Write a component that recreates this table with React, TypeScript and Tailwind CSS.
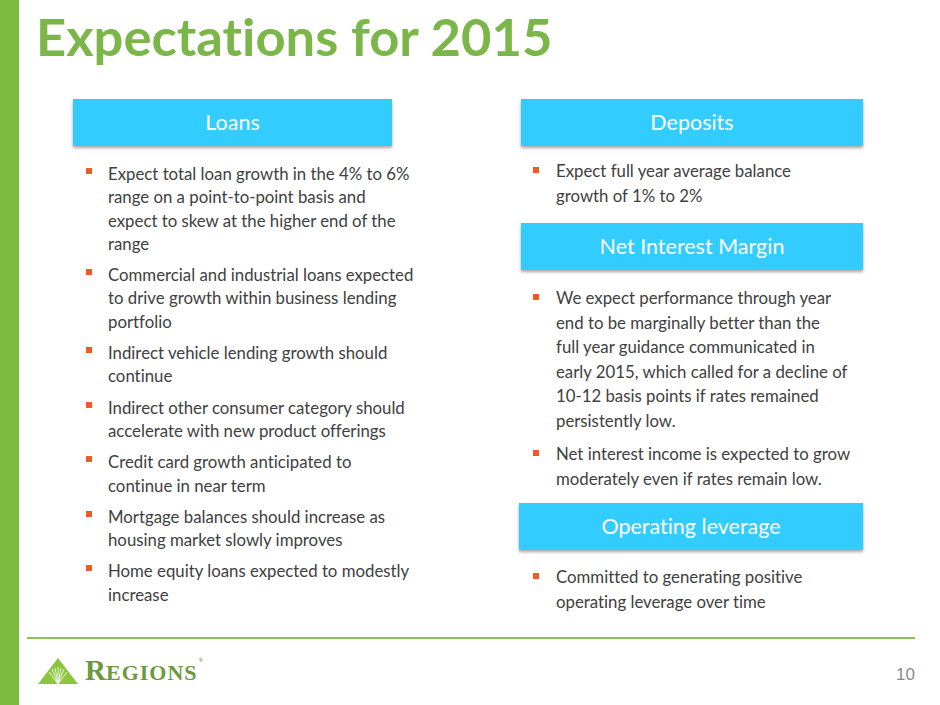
import React from "react";

const Bullet = ({ lines, pad, lh }: { lines: string[]; pad: string; lh: string }) => (
  <li className="flex">
    <span className={`w-[35px] shrink-0 flex ${pad}`}>
      <span className="block w-[6px] h-[6px] bg-[#f15a24]" />
    </span>
    <span className={`text-[16.8px] text-[#404040] ${lh}`}>
      {lines.map((l, i) => (
        <span key={i} className="block whitespace-nowrap">
          {l}
        </span>
      ))}
    </span>
  </li>
);

const Header = ({ title, extra = "" }: { title: string; extra?: string }) => (
  <div
    className={`h-[47px] bg-[#33ccff] flex items-center justify-center text-white text-[21.5px] shadow-[0_2px_3px_rgba(0,0,0,0.35)] ${extra}`}
  >
    {title}
  </div>
);

const leftItems = [
  [
    "Expect total loan growth in the 4% to 6%",
    "range on a point-to-point basis and",
    "expect to skew at the higher end of the",
    "range",
  ],
  [
    "Commercial and industrial loans expected",
    "to drive growth within business lending",
    "portfolio",
  ],
  ["Indirect vehicle lending growth should", "continue"],
  ["Indirect other consumer category should", "accelerate with new product offerings"],
  ["Credit card growth anticipated to", "continue in near term"],
  ["Mortgage balances should increase as", "housing market slowly improves"],
  ["Home equity loans expected to modestly", "increase"],
];

function Logo() {
  return (
    <div className="flex items-center">
      <svg width="40" height="26" viewBox="0 0 40 26" className="block">
        <polygon points="0,26 20,0 40,26" fill="#8cc63f" />
        <g stroke="#ffffff" strokeWidth="0.9" fill="none" opacity="0.9">
          <path d="M20 26 L11 14" />
          <path d="M20 26 L14 11" />
          <path d="M20 26 L17 10" />
          <path d="M20 26 L20 9" />
          <path d="M20 26 L23 10" />
          <path d="M20 26 L26 11" />
          <path d="M20 26 L29 14" />
        </g>
      </svg>
      <span className="ml-[7px] font-[family-name:'Liberation_Serif',serif] font-bold text-[#6b9a3b] leading-none flex items-baseline">
        <span className="text-[29px]">R</span>
        <span className="text-[22px] tracking-[1px]">EGIONS</span>
        <span className="text-[6px] self-start mt-[1px] ml-[1px]">®</span>
      </span>
    </div>
  );
}

export default function App() {
  return (
    <div className="w-[940px] h-[705px] bg-white flex overflow-hidden font-[family-name:'Lato',sans-serif] [font-variant-ligatures:none]">
      <div className="w-[19px] shrink-0 bg-[#7dbb42]" />
      <div className="flex-1 flex flex-col">
        <div className="h-[99px] pl-[17px] pt-[9px]">
          <h1 className="text-[52.5px] leading-[54px] font-bold text-[#7ab648] whitespace-nowrap">
            Expectations for 2015
          </h1>
        </div>
        <div className="h-[538px] flex">
          <div className="ml-[54px] w-[319px]">
            <Header title="Loans" />
            <ul className="mt-[16px] flex flex-col gap-[8px]">
              {leftItems.map((l, i) => (
                <Bullet key={i} lines={l} pad="pl-[13px] pt-[6px]" lh="leading-[23.3px]" />
              ))}
            </ul>
          </div>
          <div className="ml-[129px] w-[342px]">
            <Header title="Deposits" />
            <ul className="mt-[13px]">
              <Bullet
                lines={["Expect full year average balance", "growth of 1% to 2%"]}
                pad="pl-[12px] pt-[8px]"
                lh="leading-[24.5px]"
              />
            </ul>
            <Header title="Net Interest Margin" extra="mt-[15px]" />
            <ul className="mt-[16px] flex flex-col gap-[9px]">
              <Bullet
                lines={[
                  "We expect performance through year",
                  "end to be marginally better than the",
                  "full year guidance communicated in",
                  "early 2015, which called for a decline of",
                  "10-12 basis points if rates remained",
                  "persistently low.",
                ]}
                pad="pl-[12px] pt-[8px]"
                lh="leading-[24.5px]"
              />
              <Bullet
                lines={[
                  "Net interest income is expected to grow",
                  "moderately even if rates remain low.",
                ]}
                pad="pl-[12px] pt-[8px]"
                lh="leading-[24.5px]"
              />
            </ul>
            <Header title="Operating leverage" extra="mt-[12px] -ml-[2px]" />
            <ul className="mt-[15px]">
              <Bullet
                lines={["Committed to generating positive", "operating leverage over time"]}
                pad="pl-[12px] pt-[8px]"
                lh="leading-[24.5px]"
              />
            </ul>
          </div>
        </div>
        <div className="ml-[8px] w-[888px] h-[2px] bg-[#8cc45a]" />
        <div className="ml-[19px] w-[877px] mt-[17px] flex justify-between items-start">
          <Logo />
          <span className="mt-[10px] text-[17px] leading-none text-[#8a8a8a] font-[family-name:'Liberation_Sans',sans-serif]">
            10
          </span>
        </div>
      </div>
    </div>
  );
}
